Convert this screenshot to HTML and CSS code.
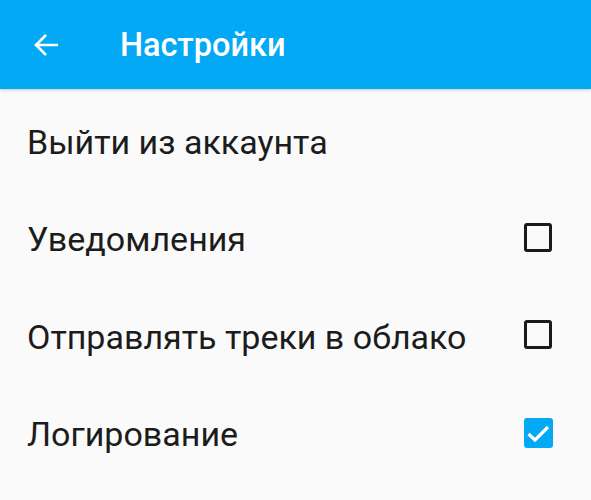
FILE: index.html
```html
<!DOCTYPE html>
<html>
    <head>
        <meta charset="UTF-8" name="viewport" content="width=device-width, initial-scale=1">
        <link rel="stylesheet" href="styles.css">
    </head>
    <body>

        <div class="toolbar">
            <button class="back">
                <svg width="26" height="24" viewBox="0 0 26 24">
                    <path d="M25 12H3M13 2L3 12l10 10" fill="none" stroke="#fff" stroke-width="2.6"/>
                </svg>
            </button>
            <h1 class="title">Настройки</h1>
        </div>

        <div class="list">
            <div class="row">
                <span class="label">Выйти из аккаунта</span>
            </div>
            <div class="row">
                <span class="label">Уведомления</span>
                <span class="check"></span>
            </div>
            <div class="row">
                <span class="label">Отправлять треки в облако</span>
                <span class="check"></span>
            </div>
            <div class="row">
                <span class="label">Логирование</span>
                <span class="check checked">
                    <svg width="29" height="30" viewBox="0 0 29 30">
                        <path d="M4.5 16l6.5 6L24 9" fill="none" stroke="#fff" stroke-width="3.2"/>
                    </svg>
                </span>
            </div>
        </div>

    </body>
</html>
```

FILE: styles.css
```css
body {
    margin: 0;
    background-color: #fafafa;
    font-family: Roboto, "Liberation Sans", sans-serif;
}

/* top bar */
.toolbar {
    display: flex;
    align-items: center;
    height: 89px;
    background-color: #03a9f4;
    box-shadow: 0 1px 3px rgba(0, 0, 0, 0.2);
}

.back {
    display: flex;
    background: none;
    border: none;
    padding: 0;
    margin-left: 33px;
    margin-right: 61px;
}

.title {
    margin: 0;
    color: #fff;
    font-size: 32.5px;
    font-weight: 500;
}

/* settings rows */
.list {
    padding-top: 4px;
}

.row {
    display: flex;
    align-items: center;
    justify-content: space-between;
    height: 97.5px;
    padding: 0 39px 0 27px;
}

.label {
    font-size: 34px;
    color: #1c1c1c;
}

.check {
    display: flex;
    box-sizing: border-box;
    width: 28px;
    height: 29px;
    margin-bottom: 4px;
    border: 3px solid #1a1a1a;
    border-radius: 3px;
}

.check.checked {
    width: 29px;
    height: 30px;
    margin-right: -1px;
    margin-bottom: 2px;
    background-color: #03a9f4;
    border: none;
}
```
